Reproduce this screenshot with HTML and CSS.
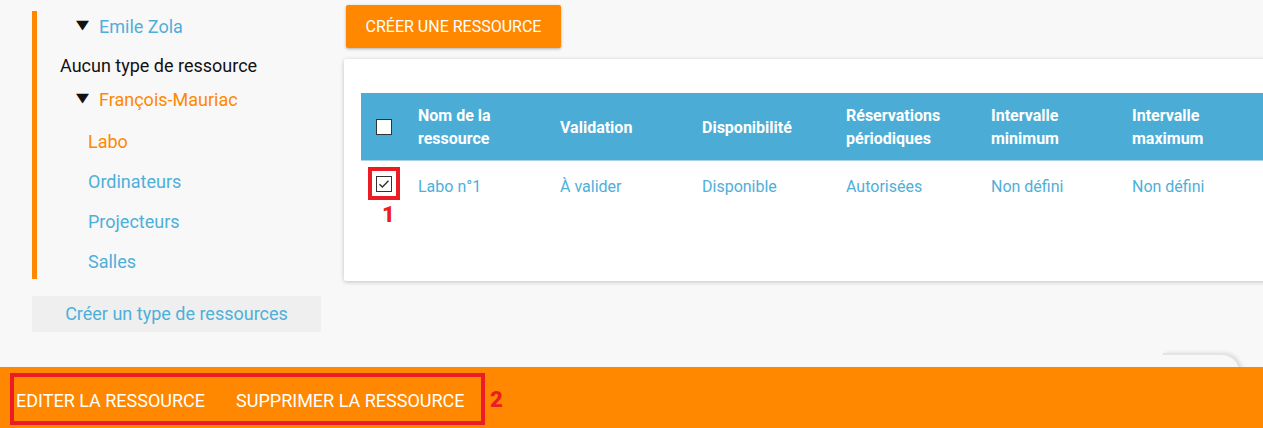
FILE: index.html
```html
<!DOCTYPE html>
<html lang="fr">
<head>
<meta charset="utf-8">
<title>Ressources</title>
<link rel="stylesheet" href="styles.css">
</head>
<body>
<div class="page">
  <aside class="sidebar">
    <ul class="tree">
      <li class="node sub"><span class="caret">▼</span><span class="link blue">Emile Zola</span></li>
      <li class="node plain">Aucun type de ressource</li>
      <li class="node sub2"><span class="caret">▼</span><span class="link orange">François-Mauriac</span></li>
      <li>
        <ul class="types">
          <li class="type orange">Labo</li>
          <li class="type blue">Ordinateurs</li>
          <li class="type blue">Projecteurs</li>
          <li class="type blue">Salles</li>
        </ul>
      </li>
    </ul>
    <div class="create-type">Créer un type de ressources</div>
  </aside>
  <main class="main">
    <button class="btn-create">CRÉER UNE RESSOURCE</button>
    <section class="card">
      <div class="grid head">
        <div class="cell chk"><span class="box"></span></div>
        <div class="cell">Nom de la<br>ressource</div>
        <div class="cell">Validation</div>
        <div class="cell">Disponibilité</div>
        <div class="cell">Réservations<br>périodiques</div>
        <div class="cell">Intervalle<br>minimum</div>
        <div class="cell">Intervalle<br>maximum</div>
      </div>
      <div class="grid row">
        <div class="cell chk">
          <span class="mark">
            <span class="box checked"><svg width="12" height="10" viewBox="0 0 12 10"><path d="M1.5 5.2 L4.4 8 L10.5 1.8" fill="none" stroke="#333" stroke-width="1.4"/></svg></span>
          </span>
          <span class="num num1">1</span>
        </div>
        <div class="cell">Labo n°1</div>
        <div class="cell">À valider</div>
        <div class="cell">Disponible</div>
        <div class="cell">Autorisées</div>
        <div class="cell">Non défini</div>
        <div class="cell">Non défini</div>
      </div>
    </section>
  </main>
</div>
<div class="tab-peek"></div>
<footer class="actionbar">
  <div class="actions">
    <span class="action">EDITER LA RESSOURCE</span>
    <span class="action">SUPPRIMER LA RESSOURCE</span>
  </div>
  <span class="num num2">2</span>
</footer>
</body>
</html>
```
FILE: styles.css
```css
* { box-sizing: border-box; }
html, body { margin: 0; padding: 0; }
body {
  background: #f8f8f8;
  font-family: Roboto, "Liberation Sans", sans-serif;
  color: #111;
  width: 1263px;
  height: 428px;
  overflow: hidden;
  position: relative;
}
ul { list-style: none; margin: 0; padding: 0; }
.blue { color: #4eafd9; }
.orange { color: #ff8800; }

.page { display: flex; align-items: flex-start; }

.sidebar { width: 344px; padding: 11px 0 0 32px; flex: none; }
.tree {
  border-left: 5px solid #ff8800;
  width: 289px;
}
.node { font-size: 18px; line-height: 32px; height: 32px; }
.node.sub, .node.sub2 { padding-left: 42px; display: flex; align-items: center; }
.node.plain { padding-left: 23px; margin-top: 7px; }
.node.sub2 { margin-top: 2px; }
.caret {
  font-family: "DejaVu Sans", sans-serif;
  font-size: 13px;
  line-height: 16px;
  color: #111;
  width: 20px;
  display: inline-block;
  margin-left: -3px;
  margin-right: 3px;
  transform: scale(1.3, 1);
  transform-origin: left center;
  position: relative;
  top: -2px;
}
.types { margin-top: 6px; padding-left: 51px; }
.type { font-size: 18px; height: 40px; line-height: 40px; }
.type:last-child { height: 37px; line-height: 40px; overflow: visible; }

.create-type {
  margin-top: 17px;
  width: 289px;
  height: 36px;
  background: #efefef;
  border-radius: 2px;
  color: #4eafd9;
  font-size: 18px;
  line-height: 36px;
  text-align: center;
}

.main { flex: 1; padding-top: 5px; min-width: 0; }
.btn-create {
  display: block;
  margin-left: 2px;
  width: 215px;
  height: 43px;
  border: none;
  border-radius: 2px;
  background: #ff8800;
  color: #fff;
  font-family: Roboto, "Liberation Sans", sans-serif;
  font-size: 16px;
  padding: 0;
  box-shadow: 0 1px 3px rgba(0,0,0,0.3);
}
.card {
  margin-top: 11px;
  background: #fff;
  width: 940px;
  height: 222px;
  border-radius: 2px;
  box-shadow: 0 1px 4px rgba(0,0,0,0.22);
  padding: 34px 0 0 17px;
}
.grid {
  display: grid;
  grid-template-columns: 42px 142px 142px 144px 145px 141px 1fr;
}
.head {
  background: #4badd6;
  height: 68px;
  color: #fff;
  font-weight: 700;
  font-size: 16px;
  line-height: 23px;
  border-bottom: 1px solid #a9d3e8;
}
.cell { padding-left: 15px; display: flex; align-items: center; }
.head .cell { padding-top: 1px; }
.row { height: 50px; color: #4eafd9; font-size: 16px; }
.box {
  width: 16px; height: 16px;
  background: #fff;
  border: 1px solid #333;
  display: flex; align-items: center; justify-content: center;
}
.chk { position: relative; }
.mark {
  position: absolute;
  left: 7px; top: 6px;
  width: 32px; height: 33px;
  border: 4px solid #ec1c24;
  display: flex; align-items: center; justify-content: center;
}
.num {
  position: absolute;
  color: #ec1c24;
  font-family: Roboto, "Liberation Sans", sans-serif;
  font-weight: 900;
  font-size: 22px;
  line-height: 22px;
}
.num1 { left: 21px; top: 43px; }

.tab-peek {
  position: absolute;
  left: 1163px; top: 353px;
  width: 76px; height: 40px;
  background: #f8f8f8;
  border-top: 2px solid #e4e4e4;
  border-radius: 0 18px 0 0;
  box-shadow: 3px 0 4px rgba(0,0,0,0.12);
}

.actionbar {
  position: absolute;
  left: 0; right: 0; bottom: 0;
  height: 61px;
  background: #ff8800;
  display: flex;
  align-items: flex-start;
  padding: 6px 0 0 10px;
}
.actions {
  width: 475px;
  height: 52px;
  border: 4px solid #ec1c24;
  display: flex;
  align-items: center;
  gap: 31px;
  padding: 2px 0 0 2px;
  color: #fff;
  font-size: 18px;
}
.num2 { position: static; margin: 16px 0 0 5px; }
```
